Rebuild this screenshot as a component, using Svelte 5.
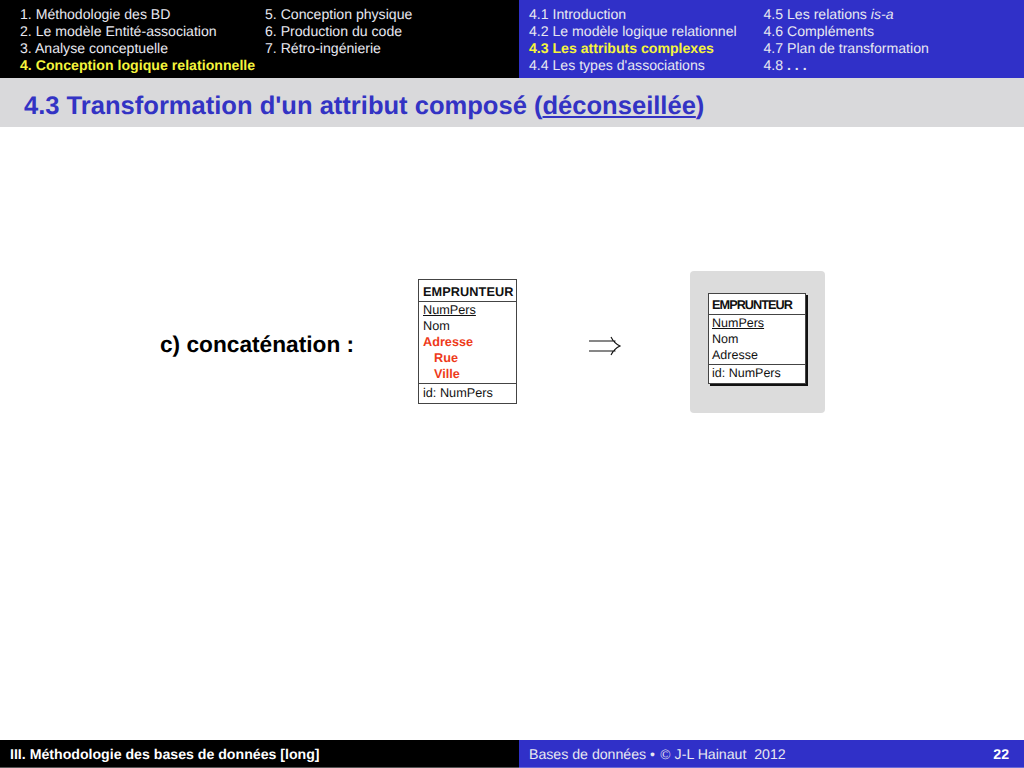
<script>
  const left1 = ['1. Méthodologie des BD', '2. Le modèle Entité-association', '3. Analyse conceptuelle'];
  const left2 = ['5. Conception physique', '6. Production du code', '7. Rétro-ingénierie'];
</script>

<div class="page">
  <header class="top">
    <nav class="nav dark">
      <div class="col c1">
        {#each left1 as t}<div class="ln">{t}</div>{/each}
        <div class="ln cur">4. Conception logique relationnelle</div>
      </div>
      <div class="col c2">
        {#each left2 as t}<div class="ln">{t}</div>{/each}
      </div>
    </nav>
    <nav class="nav blue">
      <div class="col c3">
        <div class="ln">4.1 Introduction</div>
        <div class="ln">4.2 Le modèle logique relationnel</div>
        <div class="ln cur">4.3 Les attributs complexes</div>
        <div class="ln">4.4 Les types d'associations</div>
      </div>
      <div class="col c4">
        <div class="ln">4.5 Les relations <i>is-a</i></div>
        <div class="ln">4.6 Compléments</div>
        <div class="ln">4.7 Plan de transformation</div>
        <div class="ln">4.8 <b>. . .</b></div>
      </div>
    </nav>
  </header>

  <h1 class="title">4.3 Transformation d'un attribut composé (<u>déconseillée</u>)</h1>

  <main class="main">
    <div class="label">c) concaténation :</div>
    <div class="ent source">
      <div class="head">EMPRUNTEUR</div>
      <div class="sec">
        <div><u>NumPers</u></div>
        <div>Nom</div>
        <div class="red">Adresse</div>
        <div class="red sub">Rue</div>
        <div class="red sub">Ville</div>
      </div>
      <div class="sec last">id: NumPers</div>
    </div>
    <svg class="arrow" width="33" height="20" viewBox="0 0 33 20" aria-hidden="true">
      <path d="M0 5H26.500M0 15H26.500M22 1C24 5 27 8.200 31 10C27 11.800 24 15 22 19" fill="none" stroke="#111" stroke-width="1.100"/>
    </svg>
    <div class="panel">
      <div class="ent result">
        <div class="head tight">EMPRUNTEUR</div>
        <div class="sec">
          <div><u>NumPers</u></div>
          <div>Nom</div>
          <div>Adresse</div>
        </div>
        <div class="sec">id: NumPers</div>
      </div>
    </div>
  </main>

  <footer class="foot">
    <div class="f-left">III. Méthodologie des bases de données [long]</div>
    <div class="f-right"><span>Bases de données <span class="bul">•</span> <span class="copy">©</span> J-L Hainaut&nbsp; 2012</span><b>22</b></div>
  </footer>
</div>

<style>
  :global(body) { margin: 0; background: #fff; }
  .page { width: 1024px; height: 768px; display: flex; flex-direction: column; overflow: hidden; font-family: "Liberation Sans", Arial, sans-serif; color: #000; text-rendering: geometricPrecision; }
  .top { display: flex; height: 78px; flex: none; }
  .nav { display: flex; box-sizing: border-box; padding-top: 5.500px; font-size: 14.100px; line-height: 17px; color: #e8e8f0; }
  .dark { width: 519px; background: #000; }
  .blue { width: 505px; background: #3030c8; }
  .dark .col.c1 { width: 245px; margin-left: 20px; }
  .c3 { width: 234.500px; margin-left: 10px; }
  .ln { white-space: nowrap; }
  .cur { color: #f5f53c; font-weight: bold; }
  .dark .cur { letter-spacing: 0.030px; }
  .title { flex: none; height: 49px; margin: 0; background: #d9d9db; color: #3333c4; box-sizing: border-box; padding: 12px 0 0 24px; font-size: 25.550px; line-height: 32px; font-weight: bold; white-space: nowrap; }
  .main { flex: 1; display: flex; align-items: flex-start; }
  .label { margin: 203px 0 0 160px; width: 258px; font-size: 22.700px; line-height: 28px; font-weight: bold; color: #000; white-space: nowrap; }
  .ent { box-sizing: border-box; background: #fff; border: 1px solid #444; font-size: 12.700px; line-height: 16px; color: #111; }
  .source { margin-top: 152px; width: 99px; height: 125px; }
  .head { font-weight: bold; height: 22px; line-height: 24px; padding-left: 4px; white-space: nowrap; border-bottom: 1px solid #444; box-sizing: border-box; letter-spacing: 0.100px; }
  .sec { padding: 0 0 1px 4px; }
  .sec + .sec { border-top: 1px solid #444; }
  .last { padding-top: 1px; }
  .red { color: #ee3a1a; font-weight: bold; }
  .sub { padding-left: 11px; }
  .arrow { margin: 209px 0 0 72px; flex: none; }
  .panel { box-sizing: border-box; margin: 144px 0 0 68px; width: 135px; height: 142px; background: #dcdcdc; border-radius: 4px; padding: 22px 0 0 18px; }
  .result { width: 98px; height: 91px; box-shadow: 2px 2px 0 #111; font-size: 12.500px; }
  .result .head { padding-left: 3px; height: 21px; line-height: 22px; letter-spacing: -0.950px; font-size: 12.700px; }
  .result .sec { padding-left: 3px; }
  .foot { flex: none; display: flex; height: 28px; font-size: 14.150px; line-height: 28px; }
  .f-left { width: 519px; background: #000; color: #fff; font-weight: bold; padding-left: 10px; box-sizing: border-box; border-bottom: 1px solid #555; }
  .f-right { width: 505px; background: #3030c8; color: #e8e8f0; display: flex; justify-content: space-between; padding: 0 15px 0 10px; box-sizing: border-box; border-bottom: 1px solid #6a6ad8; }
  .f-right b { color: #fff; }
  .bul { font-size: 14px; }
  .copy { font-family: "Liberation Serif", serif; padding-left: 1px; }
</style>
